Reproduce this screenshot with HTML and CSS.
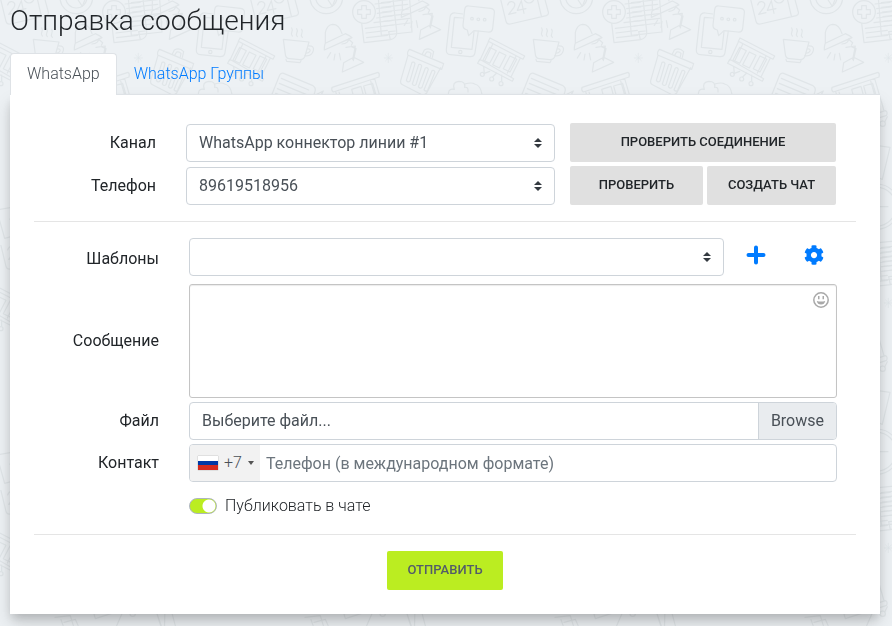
FILE: index.html
```html
<!DOCTYPE html>
<html lang="ru">
<head>
<meta charset="utf-8">
<meta name="viewport" content="width=device-width, initial-scale=1">
<title>Отправка сообщения</title>
<link rel="stylesheet" href="styles.css">
</head>
<body>
<svg class="wallpaper" aria-hidden="true">
  <defs>
    <g id="doodles" transform="translate(20 0) scale(.33333)" fill="none" stroke="#e0e5e8" stroke-width="3.6" stroke-linejoin="round" stroke-linecap="round">
      <circle cx="169" cy="-8" r="49"/><circle cx="169" cy="-8" r="32"/><path d="M169-8l18 27 8-20z"/>
      <circle cx="282" cy="36" r="34"/><path d="M275 17h14v12h12v14h-12v12h-14V43h-12V29h12z"/>
      <path d="M275 70l7 58 80-9q20-5 18-25L368-12M356 95l5 24M356 95l20-2M315 12l45-5M320 26l42-5M322 40l42-5M320 54l46-6M312 68l56-7M286 85l84-10M288 99l64-8M290 113l62-7"/>
      <path d="M40 118l77 8-12 42q-4 12-16 11l-30-3q-12-1-13-13zM48 178l2 6 40 4 4-8M114 138q20-2 16 14-5 18-26 15M113 147q9-1 7 6-3 7-12 6M67 108c-10-10 6-12-2-24M82 110c-10-10 6-12-2-24M97 112c-10-10 6-12-2-24"/>
      <path id="lamp" d="M163 150q0-15 3-20l60-29q14 6 20 12zM163 150l82-37M166 130V98q5-24 22-25 20 0 28 28M216 132q20-2 20-16M236 118l12 10-4 8M228 142l28-4-8 40M244 140l14 6-8 36M217 216l4-28 30-16 30 15zM182 158l-10 16M195 162l-3 18M208 160l4 20"/>
      <use href="#lamp" transform="translate(231 -98)"/>
      <path d="M355 160v28M343 174h24M347 165l17 17M364 165l-17 17" stroke-width="2"/>
      <path d="M578 42l-22-3q-14-1-16 12l-11 98q-1 14 12 15l58 6q14 1 16-12l10-65M578 54l-25-2-9 90 62 6 6-54"/>
      <circle cx="571" cy="156" r="5"/>
      <path d="M596 18l66 7q13 2 11 14l-5 46q-1 12-14 11l-42-4-16 15-4-17q-14-3-13-15l5-46q2-12 12-11z"/>
      <circle cx="606" cy="56" r="4"/><circle cx="625" cy="58" r="4"/><circle cx="644" cy="59" r="4"/>
      <path d="M690-10l18 74q3 10 13 8l108-25q8-3 6-11L822-12M800-12l14 60M713 15q3-11 12-10 14 3 7 17l-16 21 22-5M762 40l-8-38-12 29 26-5"/><circle cx="777" cy="-6" r="15"/>
      <path d="M660 114l104 54-5 10-104-54zM655 126l-26 56M751 174l-28 57M668 133l-24 50M738 169l-26 50M629 178l102 58-4 8-104-54zM659 142l20 10-20 38-20-10zM688 156l20 10-20 38-20-10zM720 168l20 10-20 38-20-10zM641 199l2 22M641 221l18-7M680 219l-12 12M695 225v18"/>
      <circle cx="637" cy="223" r="6"/><circle cx="665" cy="237" r="6"/><circle cx="693" cy="251" r="6"/>
      <path d="M419 148l102 43-6 17-102-43q-2-11 6-17zM414 166l-22 76q-2 10 7 13l54 28q10 4 17-4l42-76M457 162l6-12q15-8 28 5l-4 17M465 164l5-8q8-2 13 4l-2 10M426 187q7-3 9 4l-15 52q-6 6-11-2zM446 194q7-3 9 4l-17 56q-6 6-11-2zM466 204q7-3 9 4l-19 54q-6 6-11-2zM486 212q7-3 9 4l-22 55q-6 6-11-2z"/>
      <path d="M5 285l24-60q4-7 12-5l86 36q10 6 9 14l-21 80-120-34zM34 235l82 35M28 250l82 34M22 266l82 34M17 280l80 34M136 285l24-12-18 32"/>
      <path d="M186 262l138-45q6 4 3 14l-137 45q-7-5-4-14zM197 275l26 90M314 236l28 96M207 276l24 82M302 243l24 84M245 268l28-9 18 66-28 9zM281 258l27-8 19 66-28 9zM222 372l124-40q8 3 4 14l-124 40zM352 350l-8 16"/><circle cx="338" cy="371" r="8"/>
      <path d="M535 280q2-16 18-12-8-22 14-24 20 0 17 18 12-2 10 14M584 252q22-6 30 0 18 4 22 32M548 285l8 74 60 6 19-80M562 300l8 50"/>
      <path d="M405 352l26 84M435 347q16-4 18 12l20 74q-3 22-22 18-18-4-18-18zM419 353q-15 5-8 18l22 62M480 434l38-12 13 62-36 9zM495 443l28-8"/>
      <path d="M105 382l46-5 24 80M123 389l21 60M132 397l34-9 40 92M70 432l92-21q12 2 9 13l-90 28z"/>
      <path d="M290 432l70 10-23 96-49-20zM222 330l95 16-30 68"/>
      <circle cx="320" cy="620" r="68"/><circle cx="320" cy="620" r="58"/><circle cx="376" cy="620" r="4"/><path d="M320 620h34M320 620l-20-38"/>
      <path d="M325 728l93-9 8 112-92 10zM334 743l78-9M335 757l78-9M337 771l78-9M339 785l78-9M341 799l78-9M342 813l78-9"/>
      <path d="M680 630l96-17 20 77-92 25zM720 658q4-18 16-8 3 8-11 25l20-4"/>
    </g>
    <pattern id="wall" width="250" height="245" patternUnits="userSpaceOnUse">
      <use href="#doodles"/>
      <use href="#doodles" x="-250"/>
      <use href="#doodles" y="-245"/>
      <use href="#doodles" x="-250" y="-245"/>
      <use href="#doodles" y="245"/>
    </pattern>
  </defs>
  <rect width="100%" height="100%" fill="url(#wall)"/>
</svg>

<main class="page">
  <h1 class="title">Отправка сообщения</h1>
  <nav class="tabs">
    <a class="tab tab-active" href="#whatsapp" aria-current="page">WhatsApp</a>
    <a class="tab" href="#groups">WhatsApp Группы</a>
  </nav>

  <form class="card">
    <div class="connection">
      <label class="label" for="channel">Канал</label>
      <div class="select-box">
        <select class="control" id="channel"><option>WhatsApp коннектор линии #1</option></select>
        <svg class="arrows" viewBox="0 0 8 10" aria-hidden="true"><path d="M4 0L0 4h8zM4 10L0 6h8z"/></svg>
      </div>
      <div class="actions"><button class="btn" type="button">Проверить соединение</button></div>

      <label class="label" for="phone">Телефон</label>
      <div class="select-box">
        <select class="control" id="phone"><option>89619518956</option></select>
        <svg class="arrows" viewBox="0 0 8 10" aria-hidden="true"><path d="M4 0L0 4h8zM4 10L0 6h8z"/></svg>
      </div>
      <div class="actions">
        <button class="btn btn-half" type="button">Проверить</button>
        <button class="btn" type="button">Создать чат</button>
      </div>
    </div>

    <hr class="rule">

    <div class="message">
      <label class="label" for="template">Шаблоны</label>
      <div class="template-row">
        <div class="select-box">
          <select class="control" id="template"><option></option></select>
          <svg class="arrows" viewBox="0 0 8 10" aria-hidden="true"><path d="M4 0L0 4h8zM4 10L0 6h8z"/></svg>
        </div>
        <button class="icon-btn" type="button" aria-label="Добавить">
          <svg class="icon" viewBox="0 0 20 20" aria-hidden="true"><path d="M10 2.500v15M2.500 10h15" fill="none" stroke="currentColor" stroke-width="4" stroke-linecap="round"/></svg>
        </button>
        <button class="icon-btn" type="button" aria-label="Настройки">
          <svg class="icon" viewBox="0 0 512 512" aria-hidden="true"><path fill="currentColor" d="M487.400 315.700l-42.600-24.600c4.300-23.200 4.300-47 0-70.200l42.600-24.600c4.900-2.800 7.100-8.600 5.500-14-11.100-35.600-30-67.800-54.700-94.600-3.800-4.100-10-5.100-14.800-2.300L380.800 110c-17.900-15.400-38.500-27.300-60.800-35.100V25.800c0-5.600-3.900-10.500-9.400-11.700-36.700-8.200-74.300-7.800-109.200 0-5.500 1.200-9.400 6.100-9.400 11.700V75c-22.200 7.900-42.800 19.800-60.800 35.100L88.700 85.500c-4.900-2.800-11-1.900-14.800 2.300-24.700 26.700-43.600 58.900-54.700 94.600-1.700 5.400.6 11.200 5.500 14L67.300 221c-4.300 23.200-4.300 47 0 70.200l-42.600 24.600c-4.900 2.800-7.100 8.600-5.500 14 11.100 35.600 30 67.800 54.700 94.600 3.800 4.100 10 5.100 14.800 2.300l42.600-24.600c17.900 15.400 38.500 27.300 60.800 35.100v49.200c0 5.600 3.900 10.500 9.400 11.700 36.700 8.200 74.300 7.800 109.200 0 5.500-1.200 9.400-6.100 9.400-11.700v-49.200c22.200-7.900 42.800-19.800 60.800-35.100l42.600 24.600c4.900 2.800 11 1.900 14.800-2.300 24.700-26.700 43.600-58.900 54.700-94.600 1.500-5.500-.7-11.300-5.600-14.100zM256 336c-44.100 0-80-35.900-80-80s35.900-80 80-80 80 35.900 80 80-35.900 80-80 80z"/></svg>
        </button>
      </div>

      <label class="label" for="text">Сообщение</label>
      <div class="text-box">
        <textarea class="textarea" id="text"></textarea>
        <button class="emoji" type="button" aria-label="Эмодзи">
          <svg class="emoji-icon" viewBox="0 0 16 16" aria-hidden="true"><circle cx="8" cy="8" r="7.200" fill="none" stroke="currentColor" stroke-width="1.500"/><path fill="currentColor" d="M5 4h1.500v3.200H5zM9.500 4H11v3.200H9.500zM3.800 9q4.200 1.200 8.400 0Q11.500 12.600 8 12.600T3.800 9z"/></svg>
        </button>
      </div>

      <label class="label" for="file">Файл</label>
      <div class="file-box">
        <span class="file-name">Выберите файл...</span>
        <span class="file-browse">Browse</span>
        <input class="file-input" id="file" type="file">
      </div>

      <label class="label" for="contact">Контакт</label>
      <div class="phone-box">
        <button class="country" type="button">
          <span class="flag"></span>+7<span class="caret"></span>
        </button>
        <input class="phone-input" id="contact" type="tel" placeholder="Телефон (в международном формате)">
      </div>

      <label class="publish">
        <input class="switch" type="checkbox" checked>
        Публиковать в чате
      </label>
    </div>

    <hr class="rule">

    <div class="submit-row"><button class="btn btn-send" type="submit">Отправить</button></div>
  </form>
</main>
</body>
</html>
```
FILE: styles.css
```css
* { box-sizing: border-box; }

body {
  margin: 0;
  background: #edf1f4;
  color: #212529;
  font: 300 16px/24px Roboto, sans-serif;
}

button, input, select, textarea { font: inherit; color: inherit; }
button { cursor: pointer; }

.wallpaper {
  position: fixed;
  inset: 0;
  z-index: -1;
  width: 100%;
  height: 100%;
}

.page { padding: 4px 12px 12px 10px; }

.title {
  margin: 0 0 15px;
  font-size: 28px;
  line-height: 34px;
  font-weight: 300;
}

.tabs { display: flex; position: relative; }

.tab {
  padding: 8px 16px;
  border: 1px solid transparent;
  border-bottom: 0;
  border-radius: 4px 4px 0 0;
  color: #007bff;
  text-decoration: none;
}

.tab-active {
  margin-bottom: -1px;
  padding-bottom: 9px;
  background: #fff;
  border-color: #dee2e6;
  color: #495057;
}

.card {
  padding: 28px 24px 24px;
  background: #fff;
  border-top: 1px solid #dee2e6;
  box-shadow: 0 6px 10px -2px rgba(0, 0, 0, .18), 0 10px 18px rgba(0, 0, 0, .12);
}

.connection {
  display: grid;
  grid-template-columns: 122px minmax(0, 1fr) 266px;
  column-gap: 15px;
  row-gap: 4px;
  align-items: center;
  padding-right: 20px;
}

.connection .select-box { margin-left: 15px; }

.label { text-align: right; font-weight: 400; }

.select-box { position: relative; flex: 1; min-width: 0; }

.control {
  display: block;
  width: 100%;
  height: 38px;
  padding: 0 28px 0 12px;
  appearance: none;
  background: #fff;
  border: 1px solid #ced4da;
  border-radius: 4px;
  color: #495057;
  font-weight: 400;
}

.arrows {
  position: absolute;
  top: 14px;
  right: 13px;
  width: 8px;
  height: 10px;
  fill: #343a40;
  pointer-events: none;
}

.actions { display: flex; gap: 4px; }

.btn {
  flex: 1 1 auto;
  height: 39px;
  padding: 0 20px 2px;
  background: #e0e0e0;
  border: 0;
  border-radius: 2px;
  color: #212529;
  font: 500 13px/16px Roboto, sans-serif;
  text-transform: uppercase;
}

.btn-half { flex: 0 0 50%; }

.rule {
  margin: 16px 0;
  border: 0;
  border-top: 1px solid #e5e5e5;
}

.message {
  display: grid;
  grid-template-columns: 125px minmax(0, 1fr);
  column-gap: 30px;
  row-gap: 4px;
  align-items: center;
  padding-right: 19px;
}

.template-row { display: flex; align-items: center; margin-bottom: 4px; }

.icon-btn {
  display: flex;
  margin: 0 0 4px 22px;
  padding: 0;
  background: none;
  border: 0;
  color: #007bff;
}

.icon-btn + .icon-btn { margin-left: 38px; margin-right: 13px; }

.icon { width: 20px; height: 20px; }

.text-box { position: relative; }

.textarea {
  display: block;
  width: 100%;
  height: 114px;
  padding: 6px 36px 6px 12px;
  resize: none;
  background: #fff;
  border: 1px solid #c4c4c4;
  border-radius: 3px;
  box-shadow: inset 0 1px 1px rgba(0, 0, 0, .08);
  font-weight: 400;
}

.emoji {
  position: absolute;
  top: 8px;
  right: 8px;
  display: flex;
  padding: 0;
  background: none;
  border: 0;
  color: #a9a9a9;
}

.emoji-icon { width: 16px; height: 16px; }

.file-box, .phone-box {
  position: relative;
  display: flex;
  height: 38px;
  overflow: hidden;
  background: #fff;
  border: 1px solid #ced4da;
  border-radius: 4px;
  color: #495057;
  font-weight: 400;
}

.file-name { flex: 1; padding: 6px 12px; }

.file-browse {
  padding: 6px 12px;
  background: #e9ecef;
  border-left: 1px solid #ced4da;
}

.file-input {
  position: absolute;
  inset: 0;
  width: 100%;
  opacity: 0;
}

.country {
  display: flex;
  align-items: center;
  gap: 6px;
  width: 70px;
  padding: 0 0 0 8px;
  background: #f2f2f2;
  border: 0;
  font-weight: 300;
}

.flag {
  width: 20px;
  height: 14px;
  background: linear-gradient(#fff 0 33%, #0039a6 33% 67%, #d52b1e 67%);
  box-shadow: 0 0 1px #888;
}

.caret {
  border: 3px solid transparent;
  border-top: 4px solid #555;
  border-bottom: 0;
}

.phone-input {
  flex: 1;
  min-width: 0;
  padding: 2px 6px 0;
  background: none;
  border: 0;
}

.phone-input::placeholder { color: #6c757d; opacity: 1; }

.publish {
  grid-column: 2;
  display: flex;
  align-items: center;
  gap: 8px;
  margin: 8px 0 0;
}

.switch {
  width: 28px;
  height: 16px;
  margin: 0;
  appearance: none;
  background: radial-gradient(circle at 19px 7px, #fff 6px, #bbed21 7px);
  border: 1px solid #adb5bd;
  border-radius: 8px;
}

.submit-row { display: flex; justify-content: center; }

.btn-send {
  flex: none;
  background: #bbed21;
  color: #535c69;
}
```
